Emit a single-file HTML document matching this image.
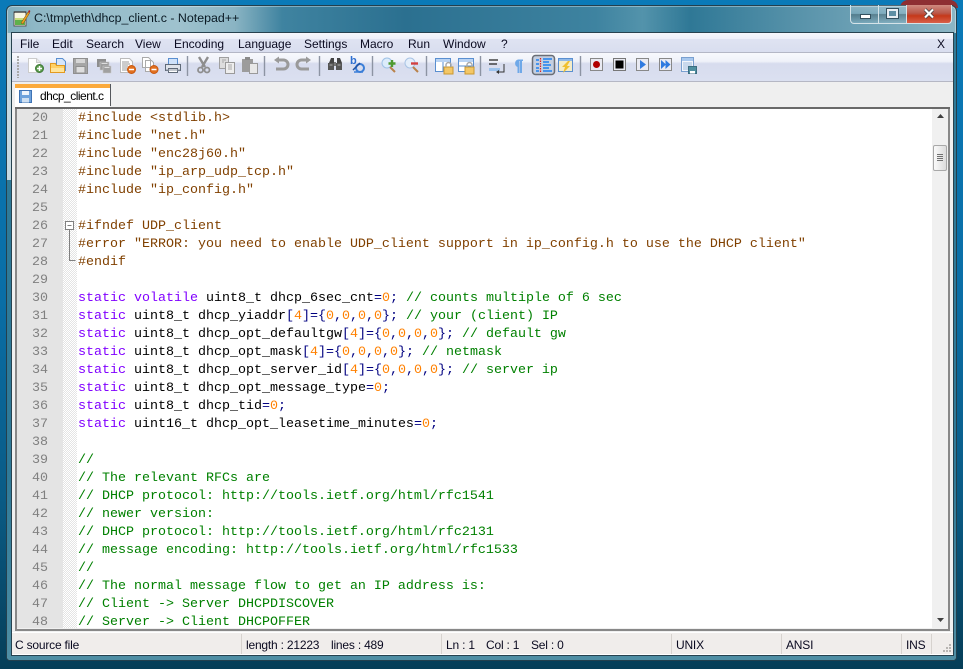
<!DOCTYPE html>
<html><head><meta charset="utf-8"><style>
html,body{margin:0;padding:0;width:963px;height:669px;overflow:hidden}
body{position:relative;background:linear-gradient(180deg,#0a7ab8 0,#0a6ea6 300px,#0a5b85 500px,#063e58 669px);font-family:"Liberation Sans",sans-serif;font-size:12px;color:#000}
.a{position:absolute}
.frame{left:6px;top:5px;width:951px;height:656px;border:1px solid #23404e;border-radius:6px 6px 4px 4px;box-sizing:border-box;background:linear-gradient(90deg,#7fadbd 0,#8fb8c6 3%,#9fc2ce 18%,#8ab4c3 24%,#3f83a0 29%,#2b7090 42%,#3e83a0 62%,#5393ab 67%,#2f7896 72%,#5a94ab 84%,#8cb6c5 100%);box-shadow:inset 0 0 0 1px rgba(255,255,255,.35)}
.lower{left:7px;top:33px;width:949px;height:627px;background:linear-gradient(180deg,#2f7a98 0,#2f7a98 70%,#4f8ea4 100%);border-radius:0 0 3px 3px}
.client{left:12px;top:33px;width:941px;height:622px;background:#f0f0f0;box-shadow:0 0 0 1px #27424f}
.m{position:absolute;top:37px;line-height:14px;white-space:nowrap;color:#0a0a20}
.s{position:absolute;top:638px;line-height:14px;white-space:nowrap;color:#0a0a20;letter-spacing:-.2px}
.sep{position:absolute;top:634px;width:1px;height:20px;background:#d6d2ce}
.code{position:absolute;left:17px;top:110px;width:915px;height:518px;overflow:hidden;font-family:"Liberation Mono",monospace;font-size:13.34px;line-height:18px;white-space:pre}
.l{height:18px;display:block}
.l b{font-weight:normal;display:inline-block;width:46px;height:18px;box-sizing:border-box;padding-left:15px;color:#808080;vertical-align:top}
.l i{font-style:normal;display:inline-block;width:15px}
.p{color:#804000}.k{color:#8000ff}.n{color:#ff8000}.o{color:#000080}.c{color:#008000}
.tb{position:absolute;top:0;left:0}
</style></head><body>
<div class="a" style="left:900px;top:0;width:58px;height:8px;background:#8e2f33;border-radius:10px 10px 0 0"></div>
<div class="a frame"></div>
<div class="a lower"></div>
<div class="a" style="left:7px;top:33px;width:5px;height:147px;background:#c5d9e1"></div>
<svg class="a" style="left:13px;top:9px" width="18" height="18" viewBox="0 0 18 18"><path d="M1 3h12v14H1z" fill="#f7f5e2" stroke="#555" stroke-width="1"/><path d="M2 11h10v5H2z" fill="#5fb04a"/><path d="M2 9h10v2H2z" fill="#c8dc7c"/><path d="M2 2v2M4 2v2M6 2v2M8 2v2M10 2v2M12 2v2" stroke="#444"/><path d="M8 14l7-11 1.6 1L10 15z" fill="#e8a020" stroke="#7a4a10" stroke-width=".5"/><path d="M15 3l1-2 1.400 1-1 2z" fill="#b02020"/></svg>
<div class="a" style="left:34px;top:11px;line-height:14px;font-size:12.4px;color:#0a1a24;white-space:nowrap">C:\tmp\eth\dhcp_client.c - Notepad++</div>
<div class="a" style="left:850px;top:5px;width:102px;height:19px;border:1px solid #d5e3e8;border-top:0;border-radius:0 0 4px 4px;box-sizing:border-box;background:linear-gradient(180deg,rgba(255,255,255,.22) 0,rgba(255,255,255,.08) 48%,rgba(0,0,0,.22) 52%,rgba(255,255,255,.08) 100%)"></div>
<div class="a" style="left:906px;top:5px;width:46px;height:19px;border:1px solid #d5e3e8;border-top:0;border-radius:0 0 4px 0;box-sizing:border-box;background:linear-gradient(180deg,#cf8a80 0,#b9584a 45%,#c5381a 60%,#d8604a 100%)"></div>
<div class="a" style="left:878px;top:5px;width:1px;height:18px;background:#d5e3e8"></div>
<div class="a" style="left:860px;top:14px;width:11px;height:5px;background:#fff;border:1px solid #33505e;box-sizing:border-box"></div>
<div class="a" style="left:887px;top:9px;width:11px;height:9px;background:#5e8ea3;border:2px solid #e8eef2;outline:1px solid #33505e;box-sizing:border-box"></div>
<svg class="a" style="left:923px;top:8px" width="12" height="11" viewBox="0 0 12 11"><path d="M2 1.500l8 8M10 1.500l-8 8" stroke="#33383c" stroke-width="3.400"/><path d="M2 1.500l8 8M10 1.500l-8 8" stroke="#fff" stroke-width="2.200"/></svg>

<div class="a client"></div>
<div class="a" style="left:12px;top:33px;width:941px;height:20px;background:linear-gradient(180deg,#f5f7fc 0,#eef0f9 30%,#dfe3f2 32%,#d9deef 100%);border-bottom:1px solid #b4b7c6;box-sizing:border-box"></div>
<div class="a" style="left:12px;top:53px;width:941px;height:29px;background:linear-gradient(180deg,#f8f9fd 0,#eff1f9 30%,#d7dcee 38%,#dbe0f0 100%);border-bottom:1px solid #b5b7c4;box-sizing:border-box"></div>
<div class="a" style="left:12px;top:82px;width:941px;height:25px;background:#efefef"></div>
<span class="m" style="left:20px">File</span><span class="m" style="left:52px">Edit</span><span class="m" style="left:86px">Search</span><span class="m" style="left:135px">View</span><span class="m" style="left:174px">Encoding</span><span class="m" style="left:238px">Language</span><span class="m" style="left:304px">Settings</span><span class="m" style="left:360px">Macro</span><span class="m" style="left:408px">Run</span><span class="m" style="left:443px">Window</span><span class="m" style="left:501px">?</span><span class="m" style="left:937px">X</span>

<svg class="tb" width="963" height="85" viewBox="0 0 963 85">
<path d="M18 56v22" stroke="#a9a9a9" stroke-width="2" stroke-dasharray="2 1"/>
<g stroke="#8d94a3" stroke-width="1.400"><path d="M187.500 56v20M264.500 56v20M319.500 56v20M372.500 56v20M426.500 56v20M480.500 56v20M580.500 56v20" fill="none"/></g>
<!-- new -->
<path d="M28.500 58.500h8l4 4v10h-12z" fill="#fff" stroke="#ccc"/><path d="M36.500 58.500v4h4" fill="#e8e8e8" stroke="#ccc"/><circle cx="39.500" cy="68.500" r="4" fill="#5a9a4a" stroke="#3f7a38"/><path d="M39.500 66v5M37 68.500h5" stroke="#fff" stroke-width="1.500"/>
<!-- open -->
<path d="M56.500 58.500h6l3 3v9h-9z" fill="#d6e6fa" stroke="#5a8fd0"/><path d="M50.500 63.500h5l1 2h8v7h-14z" fill="#ffd166" stroke="#e39a20"/><path d="M51 68h13v4H51z" fill="#ffe49a"/>
<!-- save (disabled) -->
<path d="M73.500 58.500h14v15h-14z" fill="#a6a6a6" stroke="#8f8f8f"/><path d="M76 59h9v4h-9z" fill="#d6d6d6"/><path d="M76 66.500h9v6.500h-9z" fill="#dedede" stroke="#8f8f8f"/>
<!-- save all (disabled) -->
<path d="M97 59h9v8H97z" fill="#8e8e8e"/><path d="M100 62h9v8h-9z" fill="#9c9c9c" stroke="#c8c8c8" stroke-width=".6"/><path d="M103 66h8v7h-8z" fill="#a0a0a0" stroke="#c8c8c8" stroke-width=".6"/><path d="M101.500 63.500h6M104.500 67.500h5" stroke="#ddd"/>
<!-- close -->
<path d="M120.500 58.500h9l3 3v11h-12z" fill="#fff" stroke="#bbb"/><path d="M122 62h7M122 64h8M122 66h6M122 68h5M122 70h5" stroke="#999"/><circle cx="131.500" cy="69.500" r="4" fill="#e2701f" stroke="#c85810"/><path d="M129 69.500h5" stroke="#fff" stroke-width="1.500"/>
<!-- close all -->
<path d="M142.500 57.500h6l2 2v8h-8zM145.500 60.500h6l2 2v9h-8z" fill="#fff" stroke="#aaa"/><circle cx="154" cy="69.500" r="4" fill="#e2701f" stroke="#c85810"/><path d="M151.500 69.500h5" stroke="#fff" stroke-width="1.500"/>
<!-- print -->
<path d="M168.500 58.500h9v6h-9z" fill="#cfe2fa" stroke="#5a8fd0"/><path d="M165.500 64.500h15v6h-15z" fill="#dfe3ea" stroke="#5f6a78"/><path d="M168.500 68.500h9v4h-9z" fill="#fff" stroke="#5f6a78"/><path d="M166 70h14" stroke="#8893a0"/>
<!-- cut -->
<path d="M208 57l-6 10M199 57l6 10" stroke="#8e8e8e" stroke-width="2.400" fill="none"/><circle cx="200.500" cy="70" r="2.500" fill="none" stroke="#8e8e8e" stroke-width="1.800"/><circle cx="207" cy="70" r="2.500" fill="none" stroke="#8e8e8e" stroke-width="1.800"/>
<!-- copy -->
<path d="M219.500 57.500h9v11h-9z" fill="#ddd" stroke="#a0a0a0"/><path d="M225.500 62.500h9v11h-9z" fill="#eee" stroke="#9a9a9a"/><path d="M222 60h4M222 62h2M228 65h4M228 67h4M228 69h4" stroke="#a8a8a8"/>
<!-- paste -->
<path d="M242 59h11v13h-11z" fill="#9c9c9c"/><path d="M245 57h5v3h-5z" fill="#8a8a8a"/><path d="M249.500 63.500h8v10h-8z" fill="#e8e8e8" stroke="#9a9a9a"/>
<!-- undo redo -->
<path d="M277 60h6.500a4.500 4.500 0 0 1 0 9H276" fill="none" stroke="#9a9a9a" stroke-width="3"/><path d="M274 60l5-3.500v7z" fill="#9a9a9a"/>
<path d="M308 60h-6.500a4.500 4.500 0 0 0 0 9H309" fill="none" stroke="#9a9a9a" stroke-width="3"/><path d="M311 60l-5-3.500v7z" fill="#9a9a9a"/>
<!-- find -->
<path d="M329 63l2-5h3v5zM337 58h3l2 5h-5z" fill="#444"/><path d="M328 63h6v7h-6zM336 63h6v7h-6z" fill="#555"/><path d="M334 62h2v4h-2z" fill="#777"/><path d="M329.500 65h3M337.500 65h3" stroke="#aaa"/>
<!-- replace -->
<text x="350" y="64" font-family="Liberation Sans" font-size="11" font-weight="bold" fill="#2f6fd0">b</text><circle cx="360" cy="68" r="4" fill="none" stroke="#3a7ed8" stroke-width="2"/><path d="M353 70l7-7" stroke="#1f4f9f" stroke-width="1.500"/><path d="M354 72h9" stroke="#3a7ed8" stroke-width="1.500"/>
<!-- zoom in/out -->
<circle cx="387" cy="63" r="5" fill="#dcecfb" stroke="#9fc2e6"/><path d="M390 67l5 5" stroke="#b9824a" stroke-width="2"/><path d="M392 60v7M388.500 63.500h7" stroke="#4f9a30" stroke-width="2.400"/>
<circle cx="410" cy="63" r="5" fill="#e4eefa" stroke="#a9c4e4"/><path d="M413 67l5 5" stroke="#b9824a" stroke-width="2"/><path d="M411 63.500h7" stroke="#d24040" stroke-width="2.400"/>
<!-- locks -->
<path d="M435.500 58.500h15v13h-15z" fill="#fff" stroke="#5a8fd0"/><path d="M436 59h14v3h-14z" fill="#b9d3f3"/><path d="M443 62v9" stroke="#5a8fd0"/><path d="M444 67h9v7h-9z" fill="#f3c766" stroke="#c99730"/><path d="M446 67v-2a2.500 2.500 0 0 1 5 0v2" fill="none" stroke="#a8a8a8" stroke-width="1.400"/>
<path d="M458.500 58.500h15v13h-15z" fill="#fff" stroke="#5a8fd0"/><path d="M459 59h14v3h-14z" fill="#b9d3f3"/><path d="M459 66h14" stroke="#5a8fd0"/><path d="M465 67h9v7h-9z" fill="#f3c766" stroke="#c99730"/><path d="M467 67v-2a2.500 2.500 0 0 1 5 0v2" fill="none" stroke="#a8a8a8" stroke-width="1.400"/>
<!-- wrap -->
<path d="M489 60h9M489 64h8" stroke="#222" stroke-width="1.200"/><path d="M489 68h11v3h-11z" fill="#9cc3ee"/><path d="M504 64v8h-5" fill="none" stroke="#333"/><path d="M499 70v4l-3-2z" fill="#333"/>
<!-- pilcrow -->
<path d="M518 59.500h5v1.500h-1v12h-2v-12h-.5v12h-2v-6a4 4 0 0 1 .5-7.500z" fill="#6fa8e8"/>
<!-- active -->
<rect x="532.500" y="55.500" width="22" height="19" rx="3" fill="#c5cfe0" stroke="#6a6e76" stroke-width="1.500"/>
<path d="M540.500 58v15" stroke="#e02020" stroke-width="1.200" stroke-dasharray="1.500 1"/><path d="M543 59h9M543 62h6M543 65h8M543 68h6M543 71h9M536 60h3M536 64h3M536 68h3M536 71h3" stroke="#1e80f0" stroke-width="1.400"/>
<!-- lightning -->
<path d="M558.500 58.500h14v13h-14z" fill="#f4ecc8" stroke="#5a8fd0"/><path d="M559 59h13v2h-13z" fill="#8fb8e8"/><path d="M568 61l-6 6h3l-2 6 7-7h-3l3-5z" fill="#f0c030"/>
<!-- macro -->
<path d="M590.500 58.500h12v12h-12z" fill="#e9eaf2" stroke="#888"/><circle cx="596.500" cy="64.500" r="3.500" fill="#b00000"/>
<path d="M613.500 58.500h12v12h-12z" fill="#e9eaf2" stroke="#777"/><path d="M615.500 60.500h8v8h-8z" fill="#000"/>
<path d="M636.500 58.500h12v12h-12z" fill="#e9eaf2" stroke="#888"/><path d="M640 60l6 4.500-6 4.500z" fill="#2f7ae0"/>
<path d="M659.500 58.500h12v12h-12z" fill="#e9eaf2" stroke="#888"/><path d="M661 60l5 4.500-5 4.500zM665.500 60l5 4.500-5 4.500z" fill="#2f7ae0"/>
<path d="M681.500 57.500h12v14h-12z" fill="#f2f5fb" stroke="#7aa0d0"/><path d="M682 58h11v3h-11z" fill="#a8c8ee"/><path d="M683 63h9M683 65h9M683 67h6M683 69h6" stroke="#9fbbdc"/><path d="M688.500 66.500h8v7h-8z" fill="#4f8fa0" stroke="#3c6d80"/><path d="M690 71h5v2.500h-5z" fill="#fff"/>
</svg>

<!-- tab -->
<div class="a" style="left:15px;top:84px;width:95px;height:4px;background:#fbaa3c"></div>
<div class="a" style="left:15px;top:88px;width:95px;height:19px;background:#fff"></div>
<div class="a" style="left:110px;top:84px;width:1px;height:22px;background:#55585c"></div>
<svg class="a" style="left:19px;top:90px" width="13" height="13" viewBox="0 0 13 13"><path d="M.5.500h12v12H.5z" fill="#6fa3dc" stroke="#3f73b4"/><path d="M3 1h7v4H3z" fill="#eef4fb"/><path d="M3 8h7v4.500H3z" fill="#cfe0f2"/></svg>
<div class="a" style="left:40px;top:89px;line-height:14px;color:#000;white-space:nowrap;letter-spacing:-.5px">dhcp_client.c</div>

<!-- editor -->
<div class="a" style="left:15px;top:107px;width:935px;height:524px;background:#888;border-top:2px solid #696969;box-sizing:border-box"></div>
<div class="a" style="left:17px;top:109px;width:931px;height:519px;background:#fff"></div>
<div class="a" style="left:17px;top:109px;width:46px;height:519px;background:#e4e4e4"></div>
<div class="a" style="left:63px;top:109px;width:14px;height:519px;background:repeating-conic-gradient(#e4e4e4 0 25%,#fff 0 50%) 0 0/2px 2px"></div>
<div class="a" style="left:17px;top:628px;width:931px;height:1px;background:#f0f0f0"></div>
<div class="code"><span class="l"><b>20</b><i> </i><span class="p">#include &lt;stdlib.h&gt;</span></span><span class="l"><b>21</b><i> </i><span class="p">#include "net.h"</span></span><span class="l"><b>22</b><i> </i><span class="p">#include "enc28j60.h"</span></span><span class="l"><b>23</b><i> </i><span class="p">#include "ip_arp_udp_tcp.h"</span></span><span class="l"><b>24</b><i> </i><span class="p">#include "ip_config.h"</span></span><span class="l"><b>25</b></span><span class="l"><b>26</b><i> </i><span class="p">#ifndef UDP_client</span></span><span class="l"><b>27</b><i> </i><span class="p">#error "ERROR: you need to enable UDP_client support in ip_config.h to use the DHCP client"</span></span><span class="l"><b>28</b><i> </i><span class="p">#endif</span></span><span class="l"><b>29</b></span><span class="l"><b>30</b><i> </i><span class="k">static</span> <span class="k">volatile</span> uint8_t dhcp_6sec_cnt<span class="o">=</span><span class="n">0</span><span class="o">;</span> <span class="c">// counts multiple of 6 sec</span></span><span class="l"><b>31</b><i> </i><span class="k">static</span> uint8_t dhcp_yiaddr<span class="o">[</span><span class="n">4</span><span class="o">]={</span><span class="n">0</span><span class="o">,</span><span class="n">0</span><span class="o">,</span><span class="n">0</span><span class="o">,</span><span class="n">0</span><span class="o">};</span> <span class="c">// your (client) IP</span></span><span class="l"><b>32</b><i> </i><span class="k">static</span> uint8_t dhcp_opt_defaultgw<span class="o">[</span><span class="n">4</span><span class="o">]={</span><span class="n">0</span><span class="o">,</span><span class="n">0</span><span class="o">,</span><span class="n">0</span><span class="o">,</span><span class="n">0</span><span class="o">};</span> <span class="c">// default gw</span></span><span class="l"><b>33</b><i> </i><span class="k">static</span> uint8_t dhcp_opt_mask<span class="o">[</span><span class="n">4</span><span class="o">]={</span><span class="n">0</span><span class="o">,</span><span class="n">0</span><span class="o">,</span><span class="n">0</span><span class="o">,</span><span class="n">0</span><span class="o">};</span> <span class="c">// netmask</span></span><span class="l"><b>34</b><i> </i><span class="k">static</span> uint8_t dhcp_opt_server_id<span class="o">[</span><span class="n">4</span><span class="o">]={</span><span class="n">0</span><span class="o">,</span><span class="n">0</span><span class="o">,</span><span class="n">0</span><span class="o">,</span><span class="n">0</span><span class="o">};</span> <span class="c">// server ip</span></span><span class="l"><b>35</b><i> </i><span class="k">static</span> uint8_t dhcp_opt_message_type<span class="o">=</span><span class="n">0</span><span class="o">;</span></span><span class="l"><b>36</b><i> </i><span class="k">static</span> uint8_t dhcp_tid<span class="o">=</span><span class="n">0</span><span class="o">;</span></span><span class="l"><b>37</b><i> </i><span class="k">static</span> uint16_t dhcp_opt_leasetime_minutes<span class="o">=</span><span class="n">0</span><span class="o">;</span></span><span class="l"><b>38</b></span><span class="l"><b>39</b><i> </i><span class="c">//</span></span><span class="l"><b>40</b><i> </i><span class="c">// The relevant RFCs are</span></span><span class="l"><b>41</b><i> </i><span class="c">// DHCP protocol: http://tools.ietf.org/html/rfc1541</span></span><span class="l"><b>42</b><i> </i><span class="c">// newer version:</span></span><span class="l"><b>43</b><i> </i><span class="c">// DHCP protocol: http://tools.ietf.org/html/rfc2131</span></span><span class="l"><b>44</b><i> </i><span class="c">// message encoding: http://tools.ietf.org/html/rfc1533</span></span><span class="l"><b>45</b><i> </i><span class="c">//</span></span><span class="l"><b>46</b><i> </i><span class="c">// The normal message flow to get an IP address is:</span></span><span class="l"><b>47</b><i> </i><span class="c">// Client -&gt; Server DHCPDISCOVER</span></span><span class="l"><b>48</b><i> </i><span class="c">// Server -&gt; Client DHCPOFFER</span></span></div>
<svg class="a" style="left:63px;top:218px" width="15" height="46" viewBox="0 0 15 46"><path d="M2.500 3.500h8v8h-8z" fill="#fff" stroke="#808080"/><path d="M4.500 7.500h4" stroke="#808080"/><path d="M6.500 11.500v31h6" fill="none" stroke="#808080"/></svg>

<!-- scrollbar -->
<div class="a" style="left:932px;top:109px;width:16px;height:519px;background:#f0f0f0"></div>
<svg class="a" style="left:932px;top:109px" width="16" height="519" viewBox="0 0 16 519"><path d="M5 9l3.500-4L12 9z" fill="#404040"/><path d="M5 509h7l-3.500 4z" fill="#404040"/></svg>
<div class="a" style="left:933px;top:145px;width:14px;height:26px;box-sizing:border-box;border:1px solid #a8a8a8;border-radius:2px;background:linear-gradient(90deg,#fafafa,#dcdcdc)"></div>
<svg class="a" style="left:933px;top:145px" width="14" height="26" viewBox="0 0 14 26"><path d="M4 9.500h6M4 11.500h6M4 13.500h6M4 15.500h6" stroke="#707070"/></svg>

<!-- status -->
<div class="a" style="left:12px;top:632px;width:941px;height:23px;background:#f0edeb;border-top:1px solid #fff;border-bottom:1px solid #fff;box-sizing:border-box"></div>
<span class="s" style="left:15px">C source file</span>
<span class="sep" style="left:241px"></span>
<span class="s" style="left:246px">length : 21223</span><span class="s" style="left:331px">lines : 489</span>
<span class="sep" style="left:441px"></span>
<span class="s" style="left:446px">Ln : 1</span><span class="s" style="left:486px">Col : 1</span><span class="s" style="left:531px">Sel : 0</span>
<span class="sep" style="left:671px"></span>
<span class="s" style="left:676px">UNIX</span>
<span class="sep" style="left:781px"></span>
<span class="s" style="left:786px">ANSI</span>
<span class="sep" style="left:901px"></span>
<span class="s" style="left:906px">INS</span>
<span class="sep" style="left:931px"></span>
<svg class="a" style="left:941px;top:643px" width="11" height="11" viewBox="0 0 11 11"><path d="M8 1h2v2H8zM5 4h2v2H5zM8 4h2v2H8zM2 7h2v2H2zM5 7h2v2H5zM8 7h2v2H8z" fill="#b8b5b2"/></svg>
</body></html>
